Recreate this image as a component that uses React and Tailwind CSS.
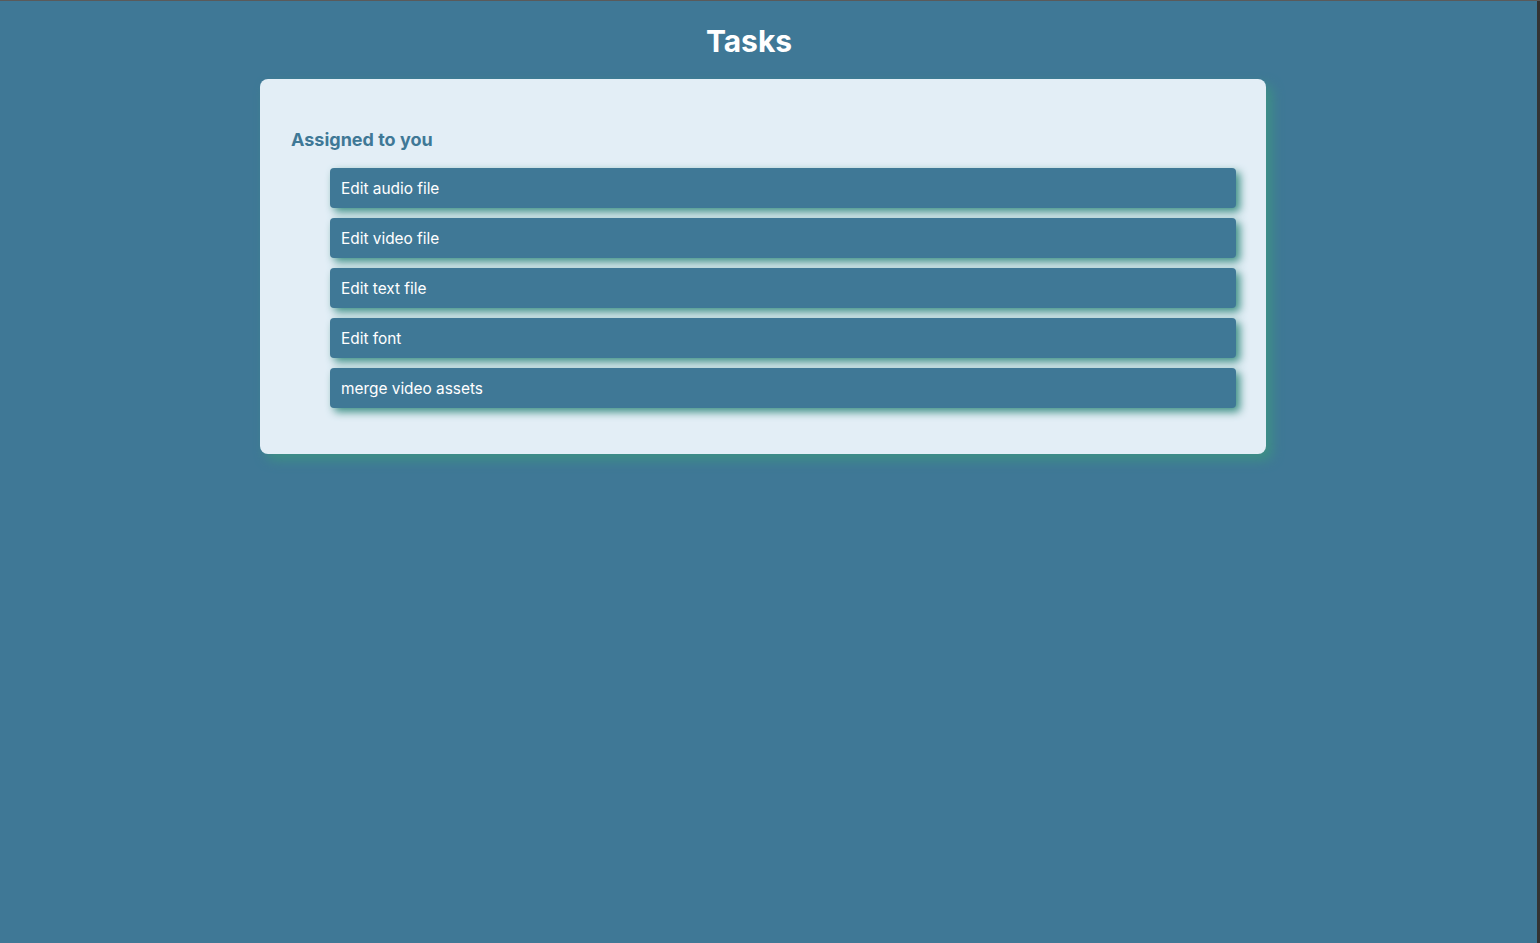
const tasks = ['Edit audio file', 'Edit video file', 'Edit text file', 'Edit font', 'merge video assets']

export default function App() {
  return (
    <div className="flex min-h-[943px] bg-[#3f7896] border-t border-[#5a5a5a] font-['Inter','Liberation_Sans',sans-serif]">
      <div className="flex-1 flex flex-col items-start pl-[260px]">
        <h1 className="mt-[21px] w-[978px] text-center text-[30px] leading-[38px] font-bold text-white">Tasks</h1>
        <div className="mt-[19px] w-[1006px] rounded-lg bg-[#e3eef6] px-[30px] pt-[49px] pb-[46px] shadow-[6px_6px_12px_#3e9085]">
          <h3 className="ml-px text-[18px] leading-[24px] font-bold text-[#3f7896]">Assigned to you</h3>
          <ul className="mt-[16px] pl-[40px] flex flex-col gap-[10px]">
            {tasks.map(t => (
              <li
                key={t}
                className="h-[40px] flex items-center rounded bg-[#3f7896] pl-[11px] pt-[2px] text-[15.4px] text-white shadow-[4px_4px_8px_#3e9085]"
              >
                {t}
              </li>
            ))}
          </ul>
        </div>
      </div>
      <div className="w-[3px] bg-[#333]" />
    </div>
  )
}
